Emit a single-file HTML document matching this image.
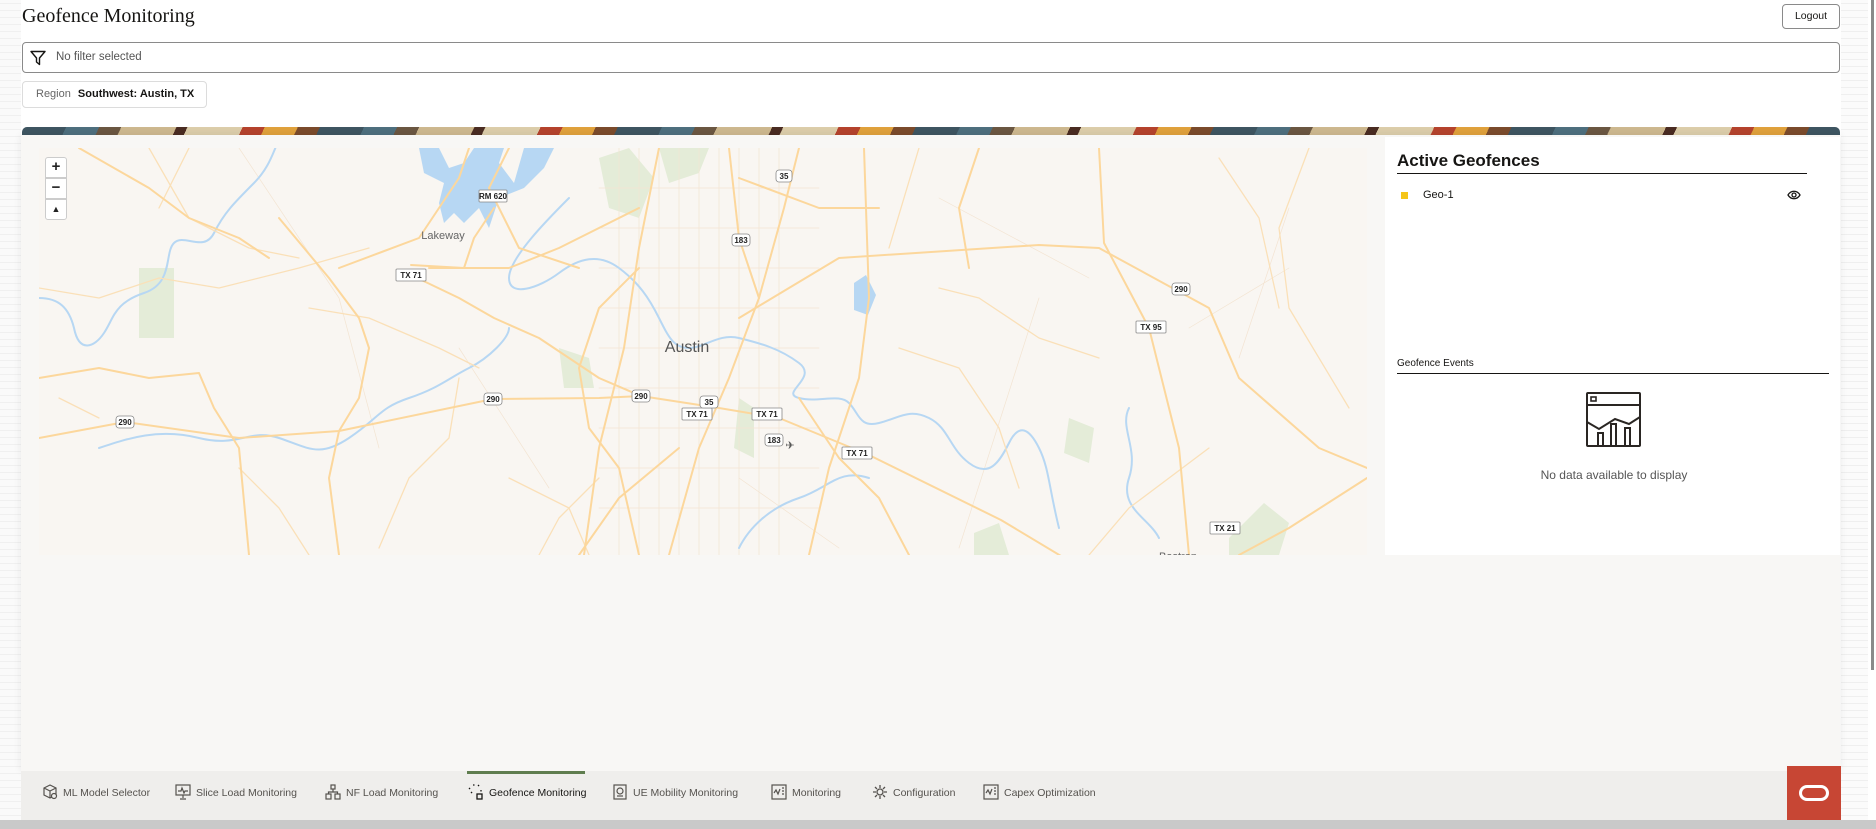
<!DOCTYPE html>
<html><head><meta charset="utf-8"><style>
*{margin:0;padding:0;box-sizing:border-box}
body{width:1876px;height:829px;overflow:hidden;background:#fff;font-family:"Liberation Sans",sans-serif;position:relative;color:#161513}
.abs{position:absolute}
.title{left:22px;top:5px;font-family:"Liberation Serif",serif;font-size:20px;color:#161513}
.logout{left:1782px;top:4px;width:58px;height:25px;border:1px solid #8a8a8a;border-radius:4px;font-size:10.5px;line-height:23px;text-align:center;color:#161513}
.filter{left:22px;top:42px;width:1818px;height:31px;border:1px solid #8a8a8a;border-radius:4px}
.filter span{position:absolute;left:33px;top:8px;font-size:11.5px;color:#555}
.chip{left:22px;top:81px;width:185px;height:27px;border:1px solid #dcdcdc;border-radius:4px;font-size:11px;line-height:25px;padding-left:13px;color:#666;white-space:nowrap}
.chip b{color:#161513;font-weight:bold;margin-left:4px}
.banner{left:22px;top:127px;width:1818px;height:9px;border-radius:5px 5px 0 0;background:repeating-linear-gradient(115deg,#3e5561 0 40px,#4e6f7e 40px 70px,#6b5742 70px 90px,#cdb88f 90px 140px,#4a2c22 140px 150px,#dccdaa 150px 200px,#b5432d 200px 220px,#e0a13c 220px 250px,#7b4b2c 250px 270px)}
.panel{left:21px;top:135px;width:1819px;height:636px;background:#f8f7f5;box-shadow:0 0 8px rgba(0,0,0,.08)}
.side{left:0;top:0;width:21px;height:829px;background:repeating-linear-gradient(0deg,#fafafa 0 6px,#f0f0f0 6px 7px)}
.side2{left:1841px;top:0;width:27px;height:829px;background:repeating-linear-gradient(0deg,#fbfbfb 0 6px,#efefef 6px 7px)}
.scroll{left:1871px;top:0;width:3px;height:670px;background:#8a8a8a}
.map{left:39px;top:148px;width:1328px;height:407px;background:#f9f6f2;overflow:hidden}
.right{left:1385px;top:137px;width:455px;height:418px;background:#fff}
.nav{left:21px;top:771px;width:1766px;height:49px;background:#efeeec}
.navi{position:absolute;top:16px;font-size:10.5px;color:#55524e;white-space:nowrap}
.navi svg{position:absolute;left:-21px;top:-3px}
.bottom{left:0;top:820px;width:1876px;height:9px;background:#c9c9c9}
.oracle{left:1787px;top:766px;width:54px;height:54px;background:#c74634}
.zc{position:absolute;left:6px;width:22px;height:21px;background:#fff;border:1px solid #ccc;text-align:center;font-weight:bold;font-size:15px;line-height:18px;color:#222}
</style></head><body>
<div class="abs side"></div><div class="abs side2"></div><div class="abs scroll"></div>
<div class="abs title">Geofence Monitoring</div>
<div class="abs logout">Logout</div>
<div class="abs filter"><svg class="abs" style="left:7px;top:7px" width="16" height="16" viewBox="0 0 16 16"><path d="M1 1.5h14L9.5 8v6.5L6.5 12V8z" fill="none" stroke="#161513" stroke-width="1.4" stroke-linejoin="round"/></svg><span>No filter selected</span></div>
<div class="abs chip">Region <b>Southwest: Austin, TX</b></div>
<div class="abs banner"></div>
<div class="abs panel"></div>
<div class="abs map">
<svg width="1328" height="407" viewBox="0 0 1328 407" fill="none" stroke-linecap="round" stroke-linejoin="round">
<g fill="#e4ecd8" stroke="none">
<rect x="100" y="120" width="35" height="70"/><path d="M560 10l30-10 25 30-15 40-30-10z"/><path d="M520 200l30 10 5 30-30 0z"/><path d="M700 250l15 10 0 50-20 -10z"/><path d="M1030 270l25 10-5 35-25-10z"/><path d="M1190 390l35-35 25 20-10 32h-50z"/><path d="M935 385l25-10 10 32h-35z"/><path d="M620 0h50l-10 25-30 10z"/>
</g>
<g stroke="#f3e4d2" stroke-width="0.7">
<path d="M580 0v407M600 0v407M620 0v407M640 0v407M660 0v407M680 0v407M700 0v407M720 0v407M740 0v407"/>
<path d="M560 40h220M560 80h220M560 120h220M560 160h220M560 200h220M560 240h220M560 280h220M560 320h220M560 360h220"/>
<path d="M200 0l100 150 40 150M420 200l90 140M700 330l100 70M900 50l150 80M1000 150l-80 250M1250 60l-50 150M1150 180l100-60"/>
</g>
<g fill="#b7d7f3" stroke="none">
<path d="M380 0h20l10 20 15-5 10-15h30l-5 15 15 20 10-35h30l-10 20-20 20-25 10-10 30-10-20-15 15-10-10-10 10-5-20 5-20-20-10z"/>
<path d="M815 135l12-8 10 20-8 20-14-5z"/>
</g>
<g stroke="#b7d7f3" stroke-width="2">
<path d="M0 150c20 0 30 10 35 30 5 25 20 20 30 5s10-30 40-40 20-40 30-50 30 10 40-10 20-30 40-50 20-40 30-50"/>
<path d="M530 50c-20 20-60 60-60 80s30 10 50-5 40-20 60-5 30 30 40 50 15 30 30 30 30-15 50-10 40 10 60 25-20 30 0 35 40-5 50 5 10 25 30 20 30-15 50-5 20 30 40 45 30 0 40-20 20-15 30 5 10 40 20 80"/>
<path d="M60 300c30-10 60-20 100-10s50-10 80 0 40 20 70 0 30-30 60-40 40-20 60-30 40-30 40-40"/>
<path d="M700 400c10-20 30-40 60-50s40-30 70-20"/>
<path d="M1090 260c-10 20 10 40 0 70s20 40 30 60"/>
</g>
<g stroke="#fae0b8" stroke-width="1.3">
<path d="M0 140l60 10 60-20 60 10 80-20 70-20M110 0l40 70 60 30 50 10M270 160l60 10 70 30 40 20M420 230l-10 60-40 40-30 70M200 320l40 40 30 47M470 330l60 30 20 47M860 200l60 20 40 60 20 60M1270 0l-30 80 10 80 60 100M880 0l-30 100M1170 300l-80 60-40 47M20 250l40 20M150 0l-30 60"/>
<path d="M560 330l-40 40-20 37M900 140l40 10 60 40 60 20M1180 10l40 60 20 90"/>
</g>
<g stroke="#fcd79c" stroke-width="2">
<path d="M760 0l-15 60-25 90-30 80-30 70-30 107"/>
<path d="M620 0l-20 100-15 100-25 100-15 107"/>
<path d="M690 0l10 90 20 60"/>
<path d="M700 170l100-60 200-13 60 3 110 60 30 70 80 70 48 20"/>
<path d="M825 0l5 150-10 80-30 90-20 87"/>
<path d="M0 290l86-16 114 16 100-7 154-32 106-1 42-2 78 12 60 10 90 37 132 65 70 42"/>
<path d="M372 127l48 23 35 20 45 20 60 40 42 18"/>
<path d="M1060 0l5 95 45 85 30 120 10 107"/>
<path d="M1328 330l-78 50-50 27"/>
<path d="M40 0l70 40 40 30 50 20 30 20M240 70l50 60 30 40 10 30-10 50-20 33-10 47 10 77M0 230l60-10 50 10 50-5 15 35 25 40 10 107M300 120l80-30 40-60 10-30M455 60l-20 30-10 30-53-3M600 60l-80 40-50 20-80 0M470 0l-20 40 30 60 60 20M940 0l-20 60 10 60M600 120l-40 40-20 60 10 60 30 40 20 87M760 250l40 60 40 40 30 57M640 300l-60 50-40 57M700 30l80 30 60 0"/>
</g>
<g font-family="Liberation Sans,sans-serif" font-size="8" font-weight="bold" fill="#222" text-anchor="middle">
<g stroke="#888" stroke-width="0.8" fill="#fff"><rect x="440" y="42" width="28" height="12" rx="1"/><rect x="357" y="121" width="30" height="12" rx="1"/><rect x="643" y="260" width="30" height="12" rx="1"/><rect x="713" y="260" width="30" height="12" rx="1"/><rect x="803" y="299" width="30" height="12" rx="1"/><rect x="1097" y="173" width="30" height="12" rx="1"/><rect x="1171" y="374" width="30" height="12" rx="1"/>
<rect x="77" y="268" width="18" height="12" rx="3"/><rect x="445" y="245" width="18" height="12" rx="3"/><rect x="593" y="242" width="18" height="12" rx="3"/><rect x="661" y="248" width="18" height="12" rx="3"/><rect x="726" y="286" width="18" height="12" rx="3"/><rect x="693" y="86" width="18" height="12" rx="3"/><rect x="737" y="22" width="16" height="12" rx="3"/><rect x="1133" y="135" width="18" height="12" rx="3"/></g>
<text x="454" y="51">RM 620</text><text x="372" y="130">TX 71</text><text x="658" y="269">TX 71</text><text x="728" y="269">TX 71</text><text x="818" y="308">TX 71</text><text x="1112" y="182">TX 95</text><text x="1186" y="383">TX 21</text>
<text x="86" y="277">290</text><text x="454" y="254">290</text><text x="602" y="251">290</text><text x="670" y="257">35</text><text x="735" y="295">183</text><text x="702" y="95">183</text><text x="745" y="31">35</text><text x="1142" y="144">290</text>
</g>
<text x="648" y="204" font-family="Liberation Sans,sans-serif" font-size="16" fill="#555" text-anchor="middle">Austin</text>
<text x="404" y="91" font-family="Liberation Sans,sans-serif" font-size="11" fill="#666" text-anchor="middle">Lakeway</text>
<text x="1139" y="412" font-family="Liberation Sans,sans-serif" font-size="11" fill="#666" text-anchor="middle">Bastrop</text>
<text x="751" y="301" font-size="11" fill="#555" text-anchor="middle">✈</text>
</svg>
<div class="zc" style="top:9px;border-radius:3px 3px 0 0">+</div>
<div class="zc" style="top:30px">−</div>
<div class="zc" style="top:51px;border-radius:0 0 3px 3px;font-size:9px">▲</div>
</div>
<div class="abs right">
<div class="abs" style="left:12px;top:14px;font-size:17px;font-weight:bold">Active Geofences</div>
<div class="abs" style="left:12px;top:36px;width:410px;height:1px;background:#161513"></div>
<div class="abs" style="left:16px;top:55px;width:7px;height:7px;background:#f5c518"></div>
<div class="abs" style="left:38px;top:52px;font-size:11px">Geo-1</div>
<svg class="abs" style="left:402px;top:52px" width="14" height="12" viewBox="0 0 14 12"><path d="M1 6c3-5 9-5 12 0c-3 5-9 5-12 0z" fill="none" stroke="#161513" stroke-width="1.3"/><circle cx="7" cy="6" r="2" fill="none" stroke="#161513" stroke-width="1.3"/></svg>
<div class="abs" style="left:12px;top:221px;font-size:10px">Geofence Events</div>
<div class="abs" style="left:12px;top:236px;width:432px;height:1px;background:#161513"></div>
<svg class="abs" style="left:201px;top:255px" width="56" height="56" viewBox="0 0 56 56" fill="none" stroke="#2a2623" stroke-width="2"><rect x="1" y="1" width="53" height="53" rx="1"/><path d="M1 13h53"/><rect x="5" y="5" width="5" height="4" stroke-width="1.6"/><path d="M1 30l12 7 16-10 14 5 11-7M12 54V41h5v13M25 54V32h5v22M39 54V36h5v18"/></svg>
<div class="abs" style="left:0;top:331px;width:458px;text-align:center;font-size:12px;color:#555">No data available to display</div>
</div>
<div class="abs nav">
<div class="abs" style="left:446px;top:0;width:118px;height:3px;background:#5f7d4f"></div>
<div class="navi" style="left:42px"><svg width="16" height="16" viewBox="0 0 16 16" fill="none" stroke="#55524e" stroke-width="1.2"><path d="M2 4l6-3 6 3v7l-6 3-6-3zM2 4l6 3 6-3M8 7v7"/><circle cx="12" cy="12" r="2.5" fill="#efeeec"/></svg>ML Model Selector</div>
<div class="navi" style="left:175px"><svg width="16" height="16" viewBox="0 0 16 16" fill="none" stroke="#55524e" stroke-width="1.2"><rect x="1" y="1" width="14" height="10"/><path d="M3 7h3l1-3 2 5 1-2h3M8 11v3M5 15h6"/></svg>Slice Load Monitoring</div>
<div class="navi" style="left:325px"><svg width="16" height="16" viewBox="0 0 16 16" fill="none" stroke="#55524e" stroke-width="1.2"><rect x="6" y="1" width="4" height="4"/><rect x="1" y="10" width="5" height="5"/><rect x="10" y="10" width="5" height="5"/><path d="M8 5v3M3.5 10V8h9v2"/></svg>NF Load Monitoring</div>
<div class="navi" style="left:468px;color:#161513"><svg width="16" height="16" viewBox="0 0 16 16" fill="none" stroke="#161513" stroke-width="1.3"><path d="M1 5l2-2M5 1h2M10 1l2 2M13 6v2M3 8l2 2" stroke-dasharray="1.5 1.5"/><rect x="9" y="10" width="5" height="5"/></svg>Geofence Monitoring</div>
<div class="navi" style="left:612px"><svg width="16" height="16" viewBox="0 0 16 16" fill="none" stroke="#55524e" stroke-width="1.2"><rect x="2" y="1" width="12" height="14"/><circle cx="8" cy="7" r="3"/><path d="M5 12h6"/></svg>UE Mobility Monitoring</div>
<div class="navi" style="left:771px"><svg width="16" height="16" viewBox="0 0 16 16" fill="none" stroke="#55524e" stroke-width="1.2"><rect x="1" y="1" width="14" height="14"/><path d="M3 9l2-3 2 4 2-5M11 4h2M11 7h2M11 10h2"/></svg>Monitoring</div>
<div class="navi" style="left:872px"><svg width="16" height="16" viewBox="0 0 16 16" fill="none" stroke="#55524e" stroke-width="1.3"><circle cx="8" cy="8" r="3"/><path d="M8 1v3M8 12v3M1 8h3M12 8h3M3 3l2 2M11 11l2 2M13 3l-2 2M3 13l2-2"/></svg>Configuration</div>
<div class="navi" style="left:983px"><svg width="16" height="16" viewBox="0 0 16 16" fill="none" stroke="#55524e" stroke-width="1.2"><rect x="1" y="1" width="14" height="14"/><path d="M3 9l2-3 2 4 2-5M11 4h2M11 7h2M11 10h2"/></svg>Capex Optimization</div>
</div>
<div class="abs bottom"></div>
<div class="abs oracle"><div class="abs" style="left:12px;top:19px;width:30px;height:16px;border:3px solid #fff;border-radius:8px"></div></div>
</body></html>
